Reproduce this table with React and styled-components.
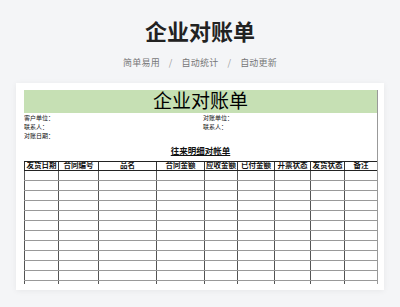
import React from 'react';
import styled, { createGlobalStyle } from 'styled-components';

const GlobalStyle = createGlobalStyle`
  body {
    margin: 0;
    background: #f4f5f7;
    font-family: "Noto Sans CJK SC", "Noto Sans", sans-serif;
  }
`;

const columns = [
  { name: '发货日期', width: 34 },
  { name: '合同编号', width: 40 },
  { name: '品名', width: 58 },
  { name: '合同金额', width: 48 },
  { name: '应收金额', width: 33 },
  { name: '已付金额', width: 37 },
  { name: '开票状态', width: 36 },
  { name: '发货状态', width: 34 },
  { name: '备注', width: 33 }
];

const rowCount = 12;

class App extends React.Component {
  render() {
    let rows = [];
    for (let i = 0; i < rowCount; i++) rows.push(i);

    return (
      <Page>
        <GlobalStyle />
        <Title>企业对账单</Title>
        <Tags>
          <span>简单易用</span>
          <Slash>/</Slash>
          <span>自动统计</span>
          <Slash>/</Slash>
          <span>自动更新</span>
        </Tags>
        <Card>
          <Sheet>
            <Banner>企业对账单</Banner>
            <Info>
              <InfoCell>客户单位：</InfoCell>
              <InfoCell>对账单位：</InfoCell>
              <InfoCell>联系人：</InfoCell>
              <InfoCell>联系人：</InfoCell>
              <InfoCell>对账日期：</InfoCell>
              <InfoCell />
            </Info>
            <Caption>往来明细对帐单</Caption>
            <Table>
              <colgroup>
                {columns.map(c => <col key={c.name} style={{ width: c.width }} />)}
              </colgroup>
              <thead>
                <tr>
                  {columns.map(c => <Th key={c.name}>{c.name}</Th>)}
                </tr>
              </thead>
              <tbody>
                {rows.map(r => (
                  <tr key={r}>
                    {columns.map(c => <Td key={c.name} />)}
                  </tr>
                ))}
              </tbody>
            </Table>
          </Sheet>
        </Card>
      </Page>
    );
  }
}

export default App;


const Page = styled.div`
  padding-top: 15px;
  height: 307px;
  box-sizing: border-box;
  overflow: hidden;
`;

const Title = styled.h1`
  margin: 0;
  text-align: center;
  font-size: 22px;
  line-height: 30px;
  font-weight: 700;
  color: #222;
`;

const Tags = styled.div`
  margin-top: 11px;
  display: flex;
  justify-content: center;
  font-size: 9px;
  line-height: 13px;
  color: #777;
  letter-spacing: 0.2px;
`;

const Slash = styled.span`
  margin: 0 9px;
  color: #999;
`;

const Card = styled.div`
  margin: 14px 16px 0;
  height: 207px;
  box-sizing: border-box;
  padding: 7px 7px 6px 8px;
  background: #fff;
  box-shadow: 0 1px 6px rgba(0, 0, 0, 0.06);
`;

const Sheet = styled.div`
  width: 353px;
  height: 100%;
  overflow: hidden;
  border-right: 1px solid #999;
  font-family: "Liberation Serif", "Noto Sans CJK SC", serif;
  color: #111;
`;

const Banner = styled.div`
  height: 23px;
  background: #c6e0b4;
  text-align: center;
  font-size: 19px;
  line-height: 24px;
  color: #000;
`;

const Info = styled.div`
  padding-top: 1px;
  display: grid;
  grid-template-columns: 179px 1fr;
`;

const InfoCell = styled.div`
  height: 9px;
  font-size: 6px;
  line-height: 9px;
`;

const Caption = styled.div`
  margin: 5px 0 4px;
  text-align: center;
  font-size: 8.5px;
  line-height: 11px;
  font-weight: 700;
  text-decoration: underline;
`;

const Table = styled.table`
  width: 353px;
  table-layout: fixed;
  border-collapse: collapse;
  border-left: 1.5px solid #222;
  border-right: 1.5px solid #222;
`;

const Th = styled.th`
  height: 8px;
  padding: 0;
  border-top: 1.5px solid #222;
  border-bottom: 1.5px solid #222;
  border-left: 1px solid #333;
  font-size: 7.5px;
  line-height: 8px;
  font-weight: 700;
  text-align: center;
  white-space: nowrap;
  overflow: hidden;
`;

const Td = styled.td`
  height: 9px;
  padding: 0;
  border-bottom: 1px solid #999;
  border-left: 1px solid #555;
`;
